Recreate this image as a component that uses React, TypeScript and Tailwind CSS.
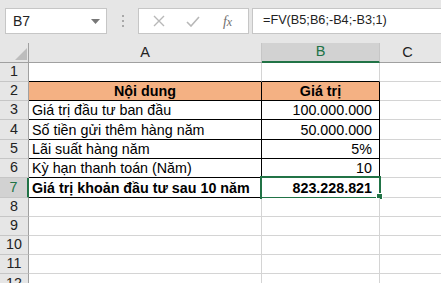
import React from "react";

type Row = {
  n: number;
  h: number;
  a?: string;
  b?: string;
  head?: boolean;
  bold?: boolean;
  table?: boolean;
  top?: boolean;
  selected?: boolean;
};

const rows: Row[] = [
  { n: 1, h: 19, top: true },
  { n: 2, h: 19, a: "Nội dung", b: "Giá trị", head: true, table: true },
  { n: 3, h: 19, a: "Giá trị đầu tư ban đầu", b: "100.000.000", table: true },
  { n: 4, h: 20, a: "Số tiền gửi thêm hàng năm", b: "50.000.000", table: true },
  { n: 5, h: 19, a: "Lãi suất hàng năm", b: "5%", table: true },
  { n: 6, h: 19, a: "Kỳ hạn thanh toán (Năm)", b: "10", table: true },
  {
    n: 7,
    h: 20,
    a: "Giá trị khoản đầu tư sau 10 năm",
    b: "823.228.821",
    bold: true,
    table: true,
    selected: true,
  },
  { n: 8, h: 19 },
  { n: 9, h: 19 },
  { n: 10, h: 19 },
  { n: 11, h: 19 },
  { n: 12, h: 20 },
];

const FormulaBar = () => (
  <div className="flex h-[43px] items-start bg-[#e6e6e6] pt-[8px]">
    {/* name box */}
    <div className="ml-[5px] flex h-[26px] w-[102px] items-center justify-between border border-[#c6c6c6] bg-white pl-[7px] pr-[6px]">
      <span className="text-[14px] text-[#222]">B7</span>
      <svg width="9" height="5" viewBox="0 0 9 5">
        <path d="M0 0 H9 L4.5 5 Z" fill="#777" />
      </svg>
    </div>
    <div className="flex h-[26px] w-[31px] flex-col items-center justify-center gap-[3px]">
      <span className="h-[2px] w-[2px] bg-[#a8a8a8]" />
      <span className="h-[2px] w-[2px] bg-[#a8a8a8]" />
      <span className="h-[2px] w-[2px] bg-[#a8a8a8]" />
    </div>
    {/* cancel / enter / insert function */}
    <div className="flex h-[26px] w-[111px] items-center border border-[#c6c6c6] bg-white">
      <div className="flex w-[40px] justify-center">
        <svg width="12" height="12" viewBox="0 0 12 12">
          <path d="M1 1 L11 11 M11 1 L1 11" stroke="#b8b8b8" strokeWidth="1.4" />
        </svg>
      </div>
      <div className="flex w-[28px] justify-center">
        <svg width="14" height="11" viewBox="0 0 14 11">
          <path d="M1 6 L5 10 L13 1" stroke="#b8b8b8" strokeWidth="1.6" fill="none" />
        </svg>
      </div>
      <div className="flex flex-1 justify-center">
        <span className="font-['Liberation_Serif',serif] text-[14px] italic text-[#707070]">
          f<span className="text-[12px]">x</span>
        </span>
      </div>
    </div>
    <div className="ml-[3px] flex h-[26px] flex-1 items-center border border-r-0 border-[#c6c6c6] bg-white pl-[10px]">
      <span className="text-[12.7px] text-[#222]">=FV(B5;B6;-B4;-B3;1)</span>
    </div>
  </div>
);

const ColumnHeaders = () => (
  <div className="flex h-[20px] border-b border-[#a0a0a0] bg-[#e6e6e6] text-[14.5px]">
    <div className="flex w-[29px] items-end justify-end border-r border-[#a0a0a0] pb-[2px] pr-[1px]">
      <svg width="12" height="12" viewBox="0 0 12 12">
        <path d="M12 0 V12 H0 Z" fill="#bdbdbd" />
      </svg>
    </div>
    <div className="flex w-[233px] items-center justify-center border-r border-[#c6c6c6] text-[#222]">
      A
    </div>
    <div className="-mb-px flex w-[118px] items-center justify-center border-b-2 border-r border-b-[#217346] border-r-[#c6c6c6] bg-[#d2d2d2] text-[#217346]">
      B
    </div>
    <div className="flex flex-1 items-center justify-center pr-[6px] text-[#222]">C</div>
  </div>
);

const GridRow = ({ row }: { row: Row }) => {
  const edge = row.table
    ? "border-black"
    : row.top
      ? "border-b-black border-r-[#d4d4d4]"
      : "border-[#d4d4d4]";
  const fill = row.head ? "bg-[#f4b183]" : "bg-white";
  const weight = row.head || row.bold ? "font-bold" : "";

  return (
    <div className="flex" style={{ height: row.h }}>
      <div
        className={
          row.selected
            ? "flex w-[29px] items-center justify-center border-b border-r-2 border-b-[#c6c6c6] border-r-[#217346] bg-[#d2d2d2] text-[#217346]"
            : "flex w-[29px] items-center justify-center border-b border-r border-b-[#c6c6c6] border-r-[#a0a0a0] bg-[#e6e6e6] text-[#222]"
        }
      >
        {row.n}
      </div>
      <div
        className={`flex w-[233px] items-end border-b border-r pb-[1px] leading-[16px] ${edge} ${fill} ${weight} ${
          row.head ? "justify-center" : "pl-[3px]"
        }`}
      >
        {row.a}
      </div>
      <div
        className={`relative flex w-[118px] items-end border-b border-r pb-[1px] leading-[16px] ${edge} ${fill} ${weight} ${
          row.head ? "justify-center" : "justify-end pr-[7px]"
        }`}
      >
        {row.b}
        {row.selected && (
          <>
            <div className="absolute -left-[2px] -top-[2px] h-[23px] w-[121px] border-2 border-[#217346]" />
            <div className="absolute left-[114px] top-[15px] h-[7px] w-[7px] border border-white bg-[#217346]" />
          </>
        )}
      </div>
      <div className="flex-1 border-b border-[#d4d4d4]" />
    </div>
  );
};

export default function App() {
  return (
    <div className="h-[283px] w-[441px] overflow-hidden bg-white font-['Liberation_Sans',Arial,sans-serif] text-[14.3px] text-black">
      <FormulaBar />
      <ColumnHeaders />
      {rows.map((row) => (
        <GridRow key={row.n} row={row} />
      ))}
    </div>
  );
}
